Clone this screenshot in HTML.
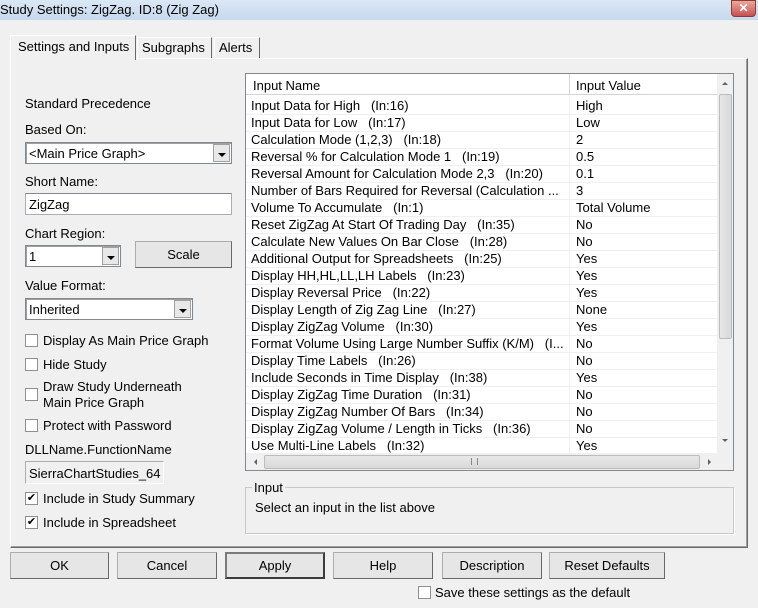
<!DOCTYPE html>
<html><head><meta charset="utf-8"><style>
*{box-sizing:border-box;margin:0;padding:0}
body{width:758px;height:608px;background:#f0f0f0;font:13px "Liberation Sans",sans-serif;color:#000;position:relative;overflow:hidden}
.a{position:absolute;white-space:nowrap}
.lbl{position:absolute;white-space:nowrap;line-height:15px}
.box{position:absolute;background:#fff;border:1px solid #abadb3;border-top-color:#828790}
.combo{position:absolute;background:#fff;border:1px solid #828790;box-shadow:inset 1px 1px 0 #a0a0a0}
.combo .t{position:absolute;left:3px;top:3px}
.combo .b{position:absolute;right:1px;top:1px;bottom:1px;width:17px;background:#e8e8e8;border:1px solid #a0a0a0}
.combo .b:after{content:"";position:absolute;left:4px;top:8px;border-left:4px solid transparent;border-right:4px solid transparent;border-top:4px solid #000}
.btn{position:absolute;background:#e6e6e6;border:1px solid #adadad;border-right-color:#696969;border-bottom-color:#696969;text-align:center;line-height:25px}
.cb{position:absolute;width:13px;height:13px;border:1px solid #8e8f8f;background:#fff}
.row{position:absolute;left:0;width:471px;height:17px;border-bottom:1px solid #f0f0f0;line-height:16px}
.row span{position:absolute;left:5px}
.row b{font-weight:normal;position:absolute;left:330px}
</style></head><body>
<div class="a" style="left:0;top:0;width:758px;height:20px;background:linear-gradient(#dbe7f5,#c7d9ee)"></div>
<div class="a" style="left:0;top:2px;font-size:13px">Study Settings: ZigZag. ID:8 (Zig Zag)</div>
<div class="a" style="left:731px;top:0;width:25px;height:17px;background:linear-gradient(#e9a99c,#c75050);border:1px solid #8d3b30;border-radius:0 0 4px 4px;color:#fff;text-align:center;font-weight:bold;font-size:12px;line-height:15px">✕</div>

<div class="a" style="left:10px;top:58px;width:738px;height:490px;border:1px solid #fff;border-right-color:#696969;border-bottom-color:#696969;box-shadow:inset -1px -1px 0 #a0a0a0"></div>
<div class="a" style="left:10px;top:35px;width:126px;height:25px;background:#f0f0f0;border:1px solid #fff;border-bottom:none;border-right-color:#696969;padding:3px 0 0 7px">Settings and Inputs</div>
<div class="a" style="left:137px;top:37px;width:75px;height:21px;border:1px solid #fff;border-bottom:none;border-right-color:#696969;padding:2px 0 0 4px">Subgraphs</div>
<div class="a" style="left:214px;top:37px;width:46px;height:21px;border:1px solid #fff;border-bottom:none;border-right-color:#696969;padding:2px 0 0 4px">Alerts</div>

<div class="lbl" style="left:25px;top:96px">Standard Precedence</div>
<div class="lbl" style="left:25px;top:122px">Based On:</div>
<div class="combo" style="left:25px;top:142px;width:207px;height:22px"><span class="t">&lt;Main Price Graph&gt;</span><span class="b"></span></div>
<div class="lbl" style="left:25px;top:174px">Short Name:</div>
<div class="box" style="left:25px;top:193px;width:207px;height:22px;padding:3px 0 0 3px">ZigZag</div>
<div class="lbl" style="left:25px;top:226px">Chart Region:</div>
<div class="combo" style="left:25px;top:245px;width:96px;height:22px"><span class="t">1</span><span class="b"></span></div>
<div class="btn" style="left:135px;top:241px;width:97px;height:27px">Scale</div>
<div class="lbl" style="left:25px;top:278px">Value Format:</div>
<div class="combo" style="left:25px;top:298px;width:168px;height:22px"><span class="t">Inherited</span><span class="b"></span></div>
<div class="cb" style="left:25px;top:334px"></div><div class="lbl" style="left:43px;top:333px">Display As Main Price Graph</div>
<div class="cb" style="left:25px;top:358px"></div><div class="lbl" style="left:43px;top:357px">Hide Study</div>
<div class="cb" style="left:25px;top:388px"></div><div class="lbl" style="left:43px;top:379px;line-height:16px">Draw Study Underneath<br>Main Price Graph</div>
<div class="cb" style="left:25px;top:419px"></div><div class="lbl" style="left:43px;top:418px">Protect with Password</div>
<div class="lbl" style="left:25px;top:442px">DLLName.FunctionName</div>
<div class="a" style="left:25px;top:461px;width:139px;height:23px;border:1px solid #adadad;border-right-color:#fff;border-bottom-color:#fff;padding:4px 0 0 3px">SierraChartStudies_64</div>
<div class="cb" style="left:25px;top:492px;font-size:11px;line-height:11px;text-align:center">✔</div><div class="lbl" style="left:43px;top:491px">Include in Study Summary</div>
<div class="cb" style="left:25px;top:516px;font-size:11px;line-height:11px;text-align:center">✔</div><div class="lbl" style="left:43px;top:515px">Include in Spreadsheet</div>

<div class="a" style="left:245px;top:73px;width:489px;height:398px;border:1px solid #828790;background:#fff;overflow:hidden">
 <div class="a" style="left:0;top:0;width:471px;height:21px;border-bottom:1px solid #d5d5d5;background:#fff"></div>
 <div class="a" style="left:7px;top:4px">Input Name</div>
 <div class="a" style="left:323px;top:0;width:1px;height:21px;background:#d5d5d5"></div>
 <div class="a" style="left:330px;top:4px">Input Value</div>
 <div class="a" style="left:323px;top:22px;width:1px;height:357px;background:#f0f0f0"></div>
 <div class="a" style="left:0;top:24px">
  <div class="row" style="top:0"><span>Input Data for High &nbsp;&nbsp;(In:16)</span><b>High</b></div>
  <div class="row" style="top:17px"><span>Input Data for Low &nbsp;&nbsp;(In:17)</span><b>Low</b></div>
  <div class="row" style="top:34px"><span>Calculation Mode (1,2,3) &nbsp;&nbsp;(In:18)</span><b>2</b></div>
  <div class="row" style="top:51px"><span>Reversal % for Calculation Mode 1 &nbsp;&nbsp;(In:19)</span><b>0.5</b></div>
  <div class="row" style="top:68px"><span>Reversal Amount for Calculation Mode 2,3 &nbsp;&nbsp;(In:20)</span><b>0.1</b></div>
  <div class="row" style="top:85px"><span>Number of Bars Required for Reversal (Calculation ...</span><b>3</b></div>
  <div class="row" style="top:102px"><span>Volume To Accumulate &nbsp;&nbsp;(In:1)</span><b>Total Volume</b></div>
  <div class="row" style="top:119px"><span>Reset ZigZag At Start Of Trading Day &nbsp;&nbsp;(In:35)</span><b>No</b></div>
  <div class="row" style="top:136px"><span>Calculate New Values On Bar Close &nbsp;&nbsp;(In:28)</span><b>No</b></div>
  <div class="row" style="top:153px"><span>Additional Output for Spreadsheets &nbsp;&nbsp;(In:25)</span><b>Yes</b></div>
  <div class="row" style="top:170px"><span>Display HH,HL,LL,LH Labels &nbsp;&nbsp;(In:23)</span><b>Yes</b></div>
  <div class="row" style="top:187px"><span>Display Reversal Price &nbsp;&nbsp;(In:22)</span><b>Yes</b></div>
  <div class="row" style="top:204px"><span>Display Length of Zig Zag Line &nbsp;&nbsp;(In:27)</span><b>None</b></div>
  <div class="row" style="top:221px"><span>Display ZigZag Volume &nbsp;&nbsp;(In:30)</span><b>Yes</b></div>
  <div class="row" style="top:238px"><span>Format Volume Using Large Number Suffix (K/M) &nbsp;&nbsp;(I...</span><b>No</b></div>
  <div class="row" style="top:255px"><span>Display Time Labels &nbsp;&nbsp;(In:26)</span><b>No</b></div>
  <div class="row" style="top:272px"><span>Include Seconds in Time Display &nbsp;&nbsp;(In:38)</span><b>Yes</b></div>
  <div class="row" style="top:289px"><span>Display ZigZag Time Duration &nbsp;&nbsp;(In:31)</span><b>No</b></div>
  <div class="row" style="top:306px"><span>Display ZigZag Number Of Bars &nbsp;&nbsp;(In:34)</span><b>No</b></div>
  <div class="row" style="top:323px"><span>Display ZigZag Volume / Length in Ticks &nbsp;&nbsp;(In:36)</span><b>No</b></div>
  <div class="row" style="top:340px"><span>Use Multi-Line Labels &nbsp;&nbsp;(In:32)</span><b>Yes</b></div>
 </div>
 <div class="a" style="left:471px;top:0;width:17px;height:379px;background:#f0f0f0"></div>
 <div class="a" style="left:476px;top:8px;border-left:3px solid transparent;border-right:3px solid transparent;border-bottom:3px solid #606060"></div>
 <div class="a" style="left:473px;top:20px;width:13px;height:245px;background:linear-gradient(90deg,#e6e6e6,#d9d9d9);border:1px solid #bcbcbc;border-radius:2px"></div>
 <div class="a" style="left:476px;top:365px;border-left:3px solid transparent;border-right:3px solid transparent;border-top:3px solid #606060"></div>
 <div class="a" style="left:0;top:379px;width:488px;height:18px;background:#f0f0f0"></div>
 <div class="a" style="left:8px;top:385px;border-top:3px solid transparent;border-bottom:3px solid transparent;border-right:3px solid #606060"></div>
 <div class="a" style="left:18px;top:381px;width:436px;height:14px;background:linear-gradient(#e8e8e8,#d9d9d9);border:1px solid #bcbcbc;border-radius:2px"></div>
 <div class="a" style="left:225px;top:384px;width:7px;height:7px;border-left:1px solid #888;border-right:1px solid #888"></div>
 <div class="a" style="left:462px;top:385px;border-top:3px solid transparent;border-bottom:3px solid transparent;border-left:3px solid #606060"></div>
</div>

<div class="a" style="left:245px;top:487px;width:489px;height:47px;border:1px solid #c8c8c8;box-shadow:1px 1px 0 #fff"></div>
<div class="a" style="left:252px;top:480px;background:#f0f0f0;padding:0 2px">Input</div>
<div class="a" style="left:255px;top:500px">Select an input in the list above</div>

<div class="btn" style="left:10px;top:552px;width:99px;height:27px">OK</div>
<div class="btn" style="left:117px;top:552px;width:100px;height:27px">Cancel</div>
<div class="btn" style="left:225px;top:552px;width:100px;height:27px;border:2px solid #3c3c3c;border-top-color:#7a7a7a;border-left-color:#7a7a7a;line-height:23px">Apply</div>
<div class="btn" style="left:333px;top:552px;width:100px;height:27px">Help</div>
<div class="btn" style="left:442px;top:552px;width:100px;height:27px">Description</div>
<div class="btn" style="left:549px;top:552px;width:116px;height:27px">Reset Defaults</div>
<div class="cb" style="left:418px;top:586px"></div>
<div class="lbl" style="left:435px;top:585px">Save these settings as the default</div>
</body></html>
